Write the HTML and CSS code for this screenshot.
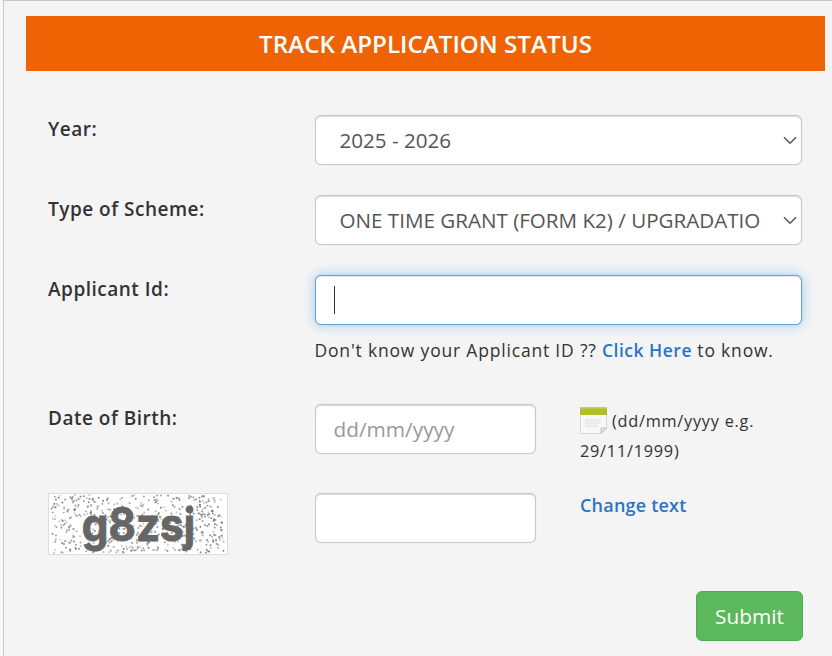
FILE: index.html
```html
<!DOCTYPE html>
<html lang="en">
<head>
    <meta charset="UTF-8">
    <meta name="viewport" content="width=device-width, initial-scale=1.0">
    <title>Track Application Status</title>
    <link rel="stylesheet" href="styles.css">
</head>
<body>
    <div class="panel">
        <h1 class="panel-title">TRACK APPLICATION STATUS</h1>
        <form class="track-form">
            <div class="form-row row-year">
                <label class="form-label" for="year">Year:</label>
                <div class="select-wrap">
                    <select class="form-control" id="year">
                        <option>2025 - 2026</option>
                    </select>
                    <svg class="chevron" viewBox="0 0 14 9"><path d="M1 1.2 L7 7.2 L13 1.2"/></svg>
                </div>
            </div>

            <div class="form-row row-scheme">
                <label class="form-label" for="scheme">Type of Scheme:</label>
                <div class="select-wrap">
                    <select class="form-control" id="scheme">
                        <option>ONE TIME GRANT (FORM K2) / UPGRADATIO</option>
                    </select>
                    <svg class="chevron" viewBox="0 0 14 9"><path d="M1 1.2 L7 7.2 L13 1.2"/></svg>
                </div>
            </div>

            <div class="form-row row-applicant">
                <label class="form-label" for="applicantId">Applicant Id:</label>
                <div>
                    <div class="input-wrap">
                        <input class="form-control focused" id="applicantId" type="text">
                        <span class="caret"></span>
                    </div>
                    <p class="help-text">Don't know your Applicant ID ?? <a class="link" href="#">Click Here</a> to know.</p>
                </div>
            </div>

            <div class="form-row row-dob">
                <label class="form-label" for="dob">Date of Birth:</label>
                <div class="split">
                    <input class="form-control" id="dob" type="text" placeholder="dd/mm/yyyy">
                    <div class="date-hint">
                        <svg class="calendar" viewBox="0 0 27 27">
                            <path d="M.5 5 H26.5 V21 L21 26.5 H.5 Z" fill="#f8f8f8" stroke="#d8d8d8"/>
                            <path d="M5 13 H21 M5 16 H21 M5 19 H18" stroke="#e9e9ef" stroke-width="2.5"/>
                            <path d="M26.5 21 H21 V26.5 Z" fill="#e4e4e4" stroke="#c4c4c4"/>
                            <rect width="27" height="8" fill="#b2bf22"/>
                            <rect width="27" height="1.5" fill="#c8cf6a"/>
                        </svg>
                        (dd/mm/yyyy e.g. 29/11/1999)
                    </div>
                </div>
            </div>

            <div class="form-row row-code">
                <svg class="code-image" id="codeImage" viewBox="0 0 180 62">
                    <g id="noise" fill="#777"></g>
                    <text class="code-text" x="32" y="49" textLength="117" lengthAdjust="spacingAndGlyphs">g8zsj</text>
                </svg>
                <div class="split">
                    <input class="form-control" type="text">
                    <a class="link change-link" href="#">Change text</a>
                </div>
            </div>

            <div class="actions">
                <button class="btn-submit" type="button">Submit</button>
            </div>
        </form>
    </div>

    <script>
        // speckles behind the code, same pattern on every load
        const noise = document.getElementById('noise');
        let seed = 17;
        function rand() {
            seed = (seed * 16807) % 2147483647;
            return seed / 2147483647;
        }
        for (let i = 0; i < 560; i++) {
            const dot = document.createElementNS('http://www.w3.org/2000/svg', 'rect');
            dot.setAttribute('x', (rand() * 178).toFixed(1));
            dot.setAttribute('y', (rand() * 60).toFixed(1));
            dot.setAttribute('width', 1.7);
            dot.setAttribute('height', 1.7);
            dot.setAttribute('opacity', (0.4 + rand() * 0.6).toFixed(2));
            noise.appendChild(dot);
        }
    </script>
</body>
</html>
```
FILE: styles.css
```css
* {
    box-sizing: border-box;
}

body {
    margin: 0;
    height: 656px;
    overflow: hidden;
    background-color: #f8f8f8;
    color: #333;
    font-family: "Open Sans", sans-serif;
}

.panel {
    height: 656px;
    margin-left: 3px;
    padding: 15px 7px 0 22px;
    background-color: #f4f4f4;
    border-top: 1px solid #c6c6c6;
    border-left: 1px solid #c6c6c6;
}

.panel-title {
    margin: 0;
    height: 55px;
    line-height: 55px;
    background-color: #f06305;
    color: #fff;
    font-size: 24.2px;
    font-weight: 600;
    text-align: center;
}

.track-form {
    padding: 44px 22px 0;
}

.form-row {
    display: grid;
    grid-template-columns: 266.5px 487.5px;
    align-items: start;
}

.row-year,
.row-scheme {
    height: 80px;
}

.row-applicant {
    height: 129px;
}

.row-dob {
    height: 89px;
}

.row-code {
    height: 98px;
}

.form-label {
    line-height: 28px;
    font-size: 19px;
    font-weight: 600;
    letter-spacing: 0.5px;
}

.select-wrap,
.input-wrap {
    position: relative;
}

.form-control {
    display: block;
    width: 100%;
    height: 50px;
    padding: 0 18px;
    border: 1px solid #c8c8c8;
    border-radius: 6px;
    background-color: #fff;
    box-shadow: inset 0 1px 1px rgba(0, 0, 0, 0.15), 0 0 1px rgba(0, 0, 0, 0.15);
    color: #555;
    font-family: "Open Sans", sans-serif;
    font-size: 20.8px;
    outline: none;
    appearance: none;
}

select.form-control {
    padding: 0 0 0 24px;
    font-size: 20.6px;
}

.form-control::placeholder {
    color: #999;
    opacity: 1;
}

.form-control.focused {
    border-color: #66a5da;
    box-shadow: inset 0 1px 1px rgba(0, 0, 0, 0.1), 0 0 1px #66afe9, 0 0 12px rgba(102, 175, 233, 0.6);
}

.chevron {
    position: absolute;
    top: 21px;
    right: 5px;
    width: 14px;
    height: 9px;
    fill: none;
    stroke: #555;
    stroke-width: 1.5;
}

.caret {
    position: absolute;
    top: 11px;
    left: 19px;
    width: 1px;
    height: 28px;
    background-color: #333;
}

.help-text {
    margin: 10px 0 0;
    line-height: 30px;
    font-size: 17.5px;
    letter-spacing: 0.81px;
    white-space: nowrap;
}

.link {
    color: #2a74c8;
    font-weight: 600;
    text-decoration: none;
}

.help-text .link {
    letter-spacing: 0.5px;
}

.split {
    display: grid;
    grid-template-columns: 221.5px 222px;
    column-gap: 44px;
    align-items: start;
}

.date-hint {
    padding-top: 2px;
    line-height: 30px;
    font-size: 16.3px;
    letter-spacing: 0.75px;
}

.calendar {
    width: 27px;
    height: 27px;
    vertical-align: -7px;
}

.change-link {
    line-height: 25px;
    font-size: 18px;
    letter-spacing: 0.2px;
}

.code-image {
    width: 180px;
    height: 62px;
    overflow: visible;
    background-color: #fff;
    border: 1px solid #ddd;
}

.code-text {
    fill: #666;
    stroke: #666;
    stroke-width: 1;
    font-family: Inter, sans-serif;
    font-size: 48px;
    font-weight: 700;
}

.actions {
    display: flex;
    justify-content: flex-end;
}

.btn-submit {
    width: 107px;
    height: 50px;
    padding: 0;
    border: 1px solid #4cae4c;
    border-radius: 6px;
    background-color: #5cb85c;
    color: #fff;
    font-family: "Open Sans", sans-serif;
    font-size: 20.8px;
}
```
